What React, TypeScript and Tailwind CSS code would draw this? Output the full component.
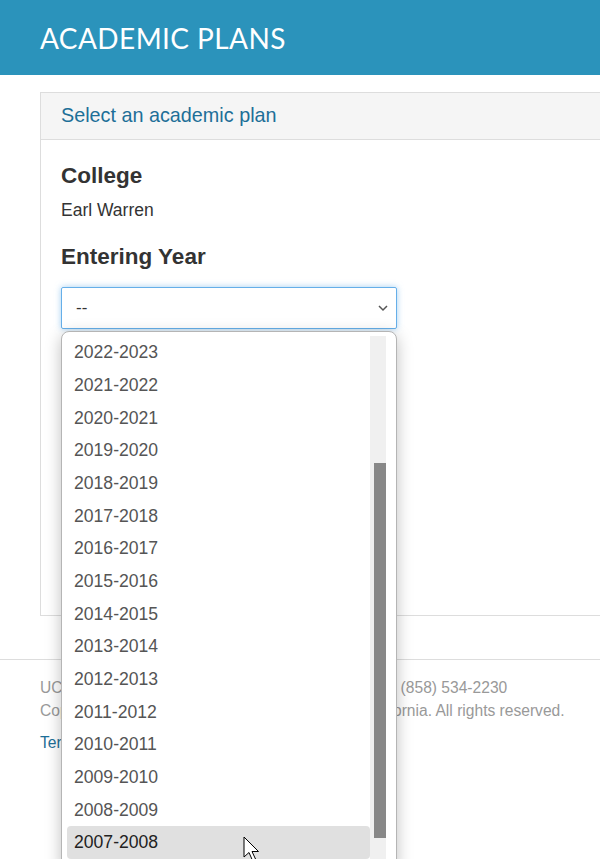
import React from 'react';

const years = [
  '2022-2023', '2021-2022', '2020-2021', '2019-2020', '2018-2019',
  '2017-2018', '2016-2017', '2015-2016', '2014-2015', '2013-2014',
  '2012-2013', '2011-2012', '2010-2011', '2009-2010', '2008-2009', '2007-2008',
];

function Cursor() {
  return (
    <svg width="20" height="28" viewBox="0 0 20 28" className="absolute left-[181px] top-[504px]">
      <path d="M1 1 L1 21 L6 16.5 L9.5 24.5 L12.5 23 L9 15.5 L15.5 15.5 Z" fill="#fff" stroke="#000" strokeWidth="1" strokeLinejoin="round" />
    </svg>
  );
}

export default function App() {
  return (
    <div className="relative h-[859px] w-[600px] overflow-hidden bg-white font-['Liberation_Sans',Arial,sans-serif] text-[#333]">
      {/* header */}
      <header className="flex h-[75px] items-center bg-[#2b93bb] px-10">
        <h1 className="font-['Lato',sans-serif] text-[28px] font-normal tracking-[0.015em] text-white">ACADEMIC PLANS</h1>
      </header>

      {/* panel */}
      <div className="ml-10 mt-[17px] w-[580px] border border-[#dddddd]">
        <div className="flex h-[47px] items-center border-b border-[#dddddd] bg-[#f5f5f5] px-5">
          <span className="text-[19.8px] text-[#1d6f98]">Select an academic plan</span>
        </div>
        <div className="px-5 pb-[78px] pt-[21px]">
          <h2 className="text-[22.5px] font-bold leading-[30px]">College</h2>
          <p className="mt-[7px] text-[17.5px] leading-[24px]">Earl Warren</p>
          <h2 className="mt-[20px] text-[22.5px] font-bold leading-[30px]">Entering Year</h2>
          <div className="relative mt-[15px] flex h-[42px] w-[336px] items-center rounded-[2px] border border-[#66afe9] px-[14px] shadow-[0_0_6px_rgba(102,175,233,0.6)]">
            <span className="text-[17px]">--</span>
            <svg width="12" height="8" viewBox="0 0 12 8" className="absolute right-[7px] top-[16px]">
              <path d="M2 2 L6 6 L10 2" fill="none" stroke="#555" strokeWidth="1.5" />
            </svg>
          </div>
          <h2 className="mt-[20px] text-[22.5px] font-bold leading-[30px]">Major</h2>
          <div className="mt-[12px] h-[42px] w-[336px] border border-[#cccccc]" />
          <h2 className="mt-[20px] text-[22.5px] font-bold leading-[30px]">Plan</h2>
          <div className="mt-[12px] h-[42px] w-[336px] border border-[#cccccc]" />
        </div>
      </div>

      {/* footer */}
      <footer className="mt-[43px] whitespace-nowrap border-t border-[#dddddd] px-10 pt-[16px] text-[15.6px] leading-[23px] text-[#999]">
        <p>UC San Diego 9500 Gilman Dr., La Jolla, CA 92093 (858) 534-2230</p>
        <p>Copyright © 2023 Regents of the University of California. All rights reserved.</p>
        <p className="mt-[9px] text-[#1d6f98]">Terms &amp; Conditions</p>
      </footer>

      {/* open select list */}
      <div className="absolute left-[61px] top-[331px] h-[540px] w-[336px] rounded-[8px] border border-[#b5b5b5] bg-white pl-[5px] pt-[4px] shadow-[0_4px_16px_rgba(0,0,0,0.25)]">
        <div className="flex">
          <ul className="w-[303px]">
            {years.map((y, i) => (
              <li
                key={y}
                className={`flex h-[32.7px] items-center rounded-[4px] px-[7px] text-[17.6px] ${i === years.length - 1 ? 'bg-[#e0e0e0] text-[#222]' : 'text-[#555]'}`}
              >
                {y}
              </li>
            ))}
          </ul>
          <div className="relative h-[540px] w-[16px] bg-[#f0f0f0]">
            <div className="absolute left-[4px] top-[127px] h-[375px] w-[12px] bg-[#888888]" />
          </div>
        </div>
        <Cursor />
      </div>
    </div>
  );
}
